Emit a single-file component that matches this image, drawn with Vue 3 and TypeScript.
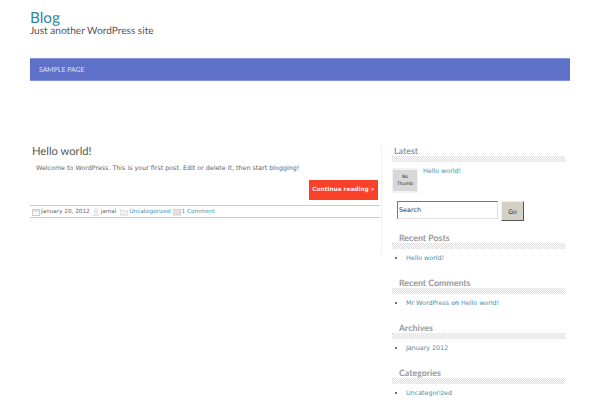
<script setup lang="ts">
const widgets = [
  { title: 'Recent Posts', items: [[{ t: 'Hello world!', link: true }]] },
  { title: 'Recent Comments', items: [[{ t: 'Mr WordPress', link: true }, { t: ' on ', link: false }, { t: 'Hello world!', link: true }]] },
  { title: 'Archives', items: [[{ t: 'January 2012', link: true }]] },
  { title: 'Categories', items: [[{ t: 'Uncategorized', link: true }]] },
]
</script>

<template>
  <div class="page">
    <header class="head">
      <a class="blog">Blog</a>
      <div class="tag">Just another WordPress site</div>
    </header>
    <nav class="nav"><a>SAMPLE PAGE</a></nav>
    <div class="cols">
      <main class="main">
        <h1 class="title">Hello world!</h1>
        <p class="text">Welcome to WordPress. This is your first post. Edit or delete it, then start blogging!</p>
        <div class="more"><a class="btn">Continue reading »</a></div>
        <div class="meta">
          <svg class="ic" viewBox="0 0 8 8"><rect x=".5" y="1.5" width="7" height="6" fill="#f8f8f8" stroke="#ccc" /><path d="M0 3h8" stroke="#ccc" /></svg>
          <span class="m1">January 20, 2012</span>
          <svg class="ic ic2" viewBox="0 0 8 8"><circle cx="4" cy="2.5" r="1.7" fill="#f2f2f2" stroke="#ddd" /><path d="M1 8c0-3 6-3 6 0z" fill="#f2f2f2" stroke="#ddd" /></svg>
          <span class="m1">jamal</span>
          <svg class="ic ic3" viewBox="0 0 8 8"><path d="M0 2h3l1 1h4v4H0z" fill="#f2f2f2" stroke="#d8d8d8" /></svg>
          <a>Uncategorized</a>
          <svg class="ic ic4" viewBox="0 0 8 8"><rect y="1.5" width="7.5" height="5.5" fill="#e2e2e2" stroke="#d0d0d0" /></svg>
          <a>1 Comment</a>
        </div>
      </main>
      <aside class="side">
        <section class="latest">
          <h3 class="wt first">Latest</h3>
          <div class="hatch"></div>
          <div class="thumbrow">
            <div class="thumb"><div class="nothumb">No<br />Thumb</div></div>
            <a class="tl">Hello world!</a>
          </div>
        </section>
        <form class="search" @submit.prevent>
          <input class="inp" value="Search" />
          <button class="go">Go</button>
        </form>
        <section v-for="w in widgets" :key="w.title" class="widget">
          <h3 class="wt">{{ w.title }}</h3>
          <div class="hatch"></div>
          <ul class="list">
            <li v-for="(row, i) in w.items" :key="i">
              <template v-for="(p, j) in row" :key="j"><a v-if="p.link">{{ p.t }}</a><span v-else>{{ p.t }}</span></template>
            </li>
          </ul>
        </section>
      </aside>
    </div>
  </div>
</template>

<style>
html, body { margin: 0; background: #fff; overflow: hidden; }
</style>

<style scoped>
.page { width: 540px; height: 400px; margin-left: 30px; overflow: hidden; font-family: "DejaVu Sans", sans-serif; font-size: 6.35px; color: #555; text-rendering: geometricPrecision; }
a { color: #4592ad; }
.head { padding-top: 10px; height: 58px; box-sizing: border-box; }
.blog { display: block; font-family: "Lato", sans-serif; font-size: 15.3px; line-height: 16px; color: #2c86a3; }
.tag { font-family: "Lato", sans-serif; font-size: 10.1px; line-height: 10px; color: #555; }
.nav { height: 23px; background: #5f70c8; border-top: 1px solid #8492dc; border-bottom: 1px solid #8492dc; box-sizing: border-box; padding: 6px 9px; margin-bottom: 61px; }
.nav a { font-family: "Lato", sans-serif; font-size: 6.9px; line-height: 10px; display: block; color: #dfe3f7; }
.cols { display: flex; }
.main { width: 350px; padding-top: 2px; }
.title { margin: 0 0 0 2px; font-family: "Lato", sans-serif; font-weight: 400; font-size: 11.2px; line-height: 15px; color: #555; }
.text { margin: 5px 0 0 6px; line-height: 10px; color: #666; }
.more { display: flex; justify-content: flex-end; margin: 6px 2px 0 0; }
.btn { background: #f9412a; color: #fdeee9; font-weight: 700; font-size: 5.8px; line-height: 20px; padding: 0 3.5px; }
.meta { display: flex; align-items: center; border-top: 1px solid #ccc; border-bottom: 1px solid #ccc; margin-top: 5px; height: 11px; padding: 0 0 0 2px; font-size: 5.7px; color: #666; }
.ic { width: 8px; height: 8px; margin-right: 1px; }
.ic2 { margin-left: 2px; }
.ic3 { margin-left: 4px; }
.ic4 { margin-left: 2px; }
.m1 { white-space: nowrap; }
.side { position: relative; width: 188px; margin-left: 2px; padding: 3px 5px 0 10px; box-sizing: border-box; }
.side::before { content: ""; position: absolute; left: -1px; top: 3px; height: 110px; width: 1px; background: #f0f0f0; }
.wt { margin: 0; padding-left: 7px; font-family: "Lato", sans-serif; font-weight: 700; font-size: 8.8px; line-height: 11px; color: #999; }
.wt.first { padding-left: 2px; }
.hatch { height: 6px; background: repeating-linear-gradient(135deg, #ddd 0 .71px, #fff .71px 1.41px); }
.thumbrow { display: flex; margin-top: 6px; }
.thumb { background: #f2f2f2; padding: 2px 1px; width: 24px; height: 21px; }
.nothumb { width: 24px; height: 21px; background: #d8d8d8; font-size: 4.6px; line-height: 7px; text-align: center; color: #222; padding-top: 4px; box-sizing: border-box; }
.tl { margin-left: 5px; line-height: 8px; }
.search { display: flex; margin: 8px 0 0 5px; height: 20px; }
.inp { width: 101px; height: 18px; box-sizing: border-box; border: 1px solid #777; border-right-color: #ddd; border-bottom-color: #ddd; font-family: "DejaVu Sans", sans-serif; font-size: 6.4px; padding: 0 1px; color: #333; }
.go { margin-left: 3px; width: 23px; height: 20px; background: #d4d0c8; border: 1px solid; border-color: #eee #555 #555 #eee; font-family: "DejaVu Sans", sans-serif; font-size: 6.3px; padding: 0; color: #333; }
.widget { margin-top: 7px; height: 38px; }
.search + .widget { margin-top: 11px; }
.list { margin: 4px 0 0; padding: 0 0 0 14px; list-style: disc; line-height: 10px; }
.list li::marker { font-size: 8px; color: #444; }
</style>
